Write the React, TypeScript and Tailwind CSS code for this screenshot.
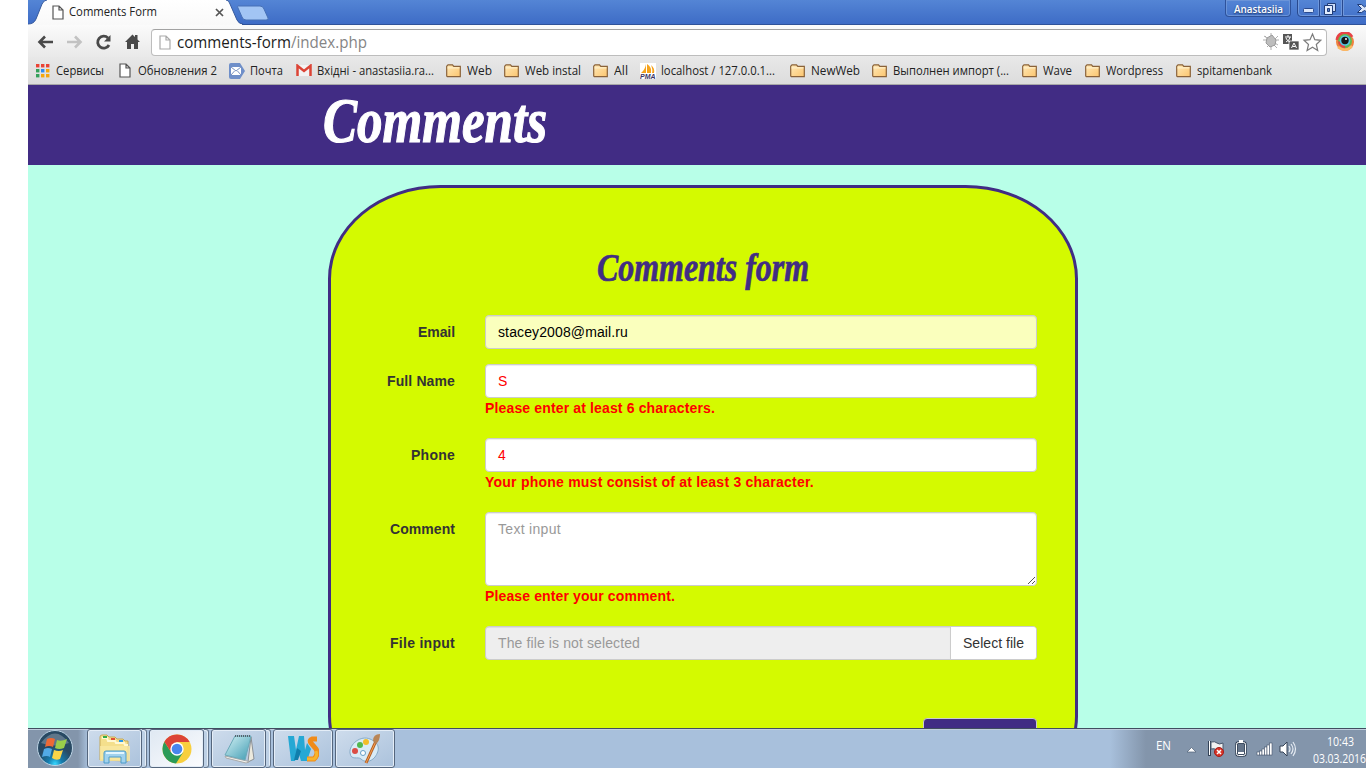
import React, { useLayoutEffect, useRef, useState } from "react";

/* Text stretched or tracked so that it takes exactly the given width. */
function Fit({ w, children, className = "", track = false }: { w: number; children: string; className?: string; track?: boolean }) {
  const ref = useRef<HTMLSpanElement>(null);
  const [style, setStyle] = useState<React.CSSProperties>({});
  useLayoutEffect(() => {
    const natural = ref.current!.getBoundingClientRect().width;
    if (track) setStyle({ letterSpacing: (w - natural) / children.length + "px" });
    else setStyle({ transform: `scaleX(${w / natural})` });
  }, []);
  return (
    <span className="flex shrink-0 whitespace-nowrap" style={{ width: w }}>
      <span ref={ref} style={style} className={"block shrink-0 origin-left whitespace-pre " + className}>{children}</span>
    </span>
  );
}

const Page = ({ className = "" }: { className?: string }) => (
  <svg className={className} width="12" height="15" viewBox="0 0 12 15" fill="#fff" stroke="currentColor" strokeWidth="1.2">
    <path d="M1 1h6l4 4v9H1zM7 1v4h4" />
  </svg>
);

const Folder = () => (
  <svg width="16" height="14" viewBox="0 0 16 14">
    <defs><linearGradient id="fold" x2="1" y2="1"><stop stopColor="#ffe9b8" /><stop offset="1" stopColor="#fbc56f" /></linearGradient></defs>
    <path d="M.7 12V2.200L2 .8h4.500l1.300 1.600h6.500v10.200H1.300z" fill="url(#fold)" stroke="#8a6239" strokeWidth="1.200" />
    <path d="M1.500 3.900h12" stroke="#fff3d2" />
  </svg>
);

const AppsIcon = () => (
  <svg width="14" height="14" viewBox="0 0 14 14">
    {["#ea4335", "#ea4335", "#ea4335", "#34a05a", "#2d8cf0", "#f4a60c", "#34a05a", "#f4a60c", "#f4a60c"].map((c, i) => (
      <rect key={i} x={(i % 3) * 5} y={Math.floor(i / 3) * 5} width="3.400" height="3.400" fill={c} />
    ))}
  </svg>
);

const MailIcon = () => (
  <svg width="16" height="16" viewBox="0 0 16 16">
    <path d="M0 2q0-2 2-2h9l5 8-5 8H2q-2 0-2-2z" fill="#6f8fc9" />
    <path d="M2 4h10v8H2z" fill="#fff" /><path d="M2 4l5 4 5-4M2 12l3.500-4M12 12L8.500 8" fill="none" stroke="#7891bf" />
  </svg>
);

const Gmail = () => (
  <svg width="16" height="13" viewBox="0 0 16 13">
    <path d="M1 1h14v11H1z" fill="#f3f3f3" />
    <path d="M1.500 12V1.800L8 7l6.500-5.200V12" fill="none" stroke="#dc4436" strokeWidth="2.500" />
  </svg>
);

const Pma = () => (
  <svg width="16" height="16" viewBox="0 0 16 16">
    <path d="M0 0h16v16H0z" fill="#fff" />
    <path d="M6 1v9H1q4-3 5-9M7 1q5 3 4 9H7zM11 2q4 3 3 8h-2q1-3-1-8" fill="#f6a31a" />
    <text x="0" y="15.800" fontSize="6.500" fontWeight="bold" fontStyle="italic" textLength="15.500" lengthAdjust="spacingAndGlyphs" fontFamily="Liberation Sans" fill="#3b3565">PMA</text>
  </svg>
);

const bookmarks: { icon: React.ReactNode; label: string; pitch: number; w: number; off?: number }[] = [
  { icon: <AppsIcon />, label: "Сервисы", pitch: 83, w: 48, off: 20 },
  { icon: <Page className="text-[#555]" />, label: "Обновления 2", pitch: 110, w: 79, off: 19 },
  { icon: <MailIcon />, label: "Почта", pitch: 67, w: 33 },
  { icon: <Gmail />, label: "Вхідні - anastasiia.ra...", pitch: 150, w: 117 },
  { icon: <Folder />, label: "Web", pitch: 58, w: 25 },
  { icon: <Folder />, label: "Web instal", pitch: 89, w: 56 },
  { icon: <Folder />, label: "All", pitch: 47, w: 14 },
  { icon: <Pma />, label: "localhost / 127.0.0.1...", pitch: 150, w: 114 },
  { icon: <Folder />, label: "NewWeb", pitch: 82, w: 49 },
  { icon: <Folder />, label: "Выполнен импорт (...", pitch: 150, w: 116 },
  { icon: <Folder />, label: "Wave", pitch: 63, w: 29 },
  { icon: <Folder />, label: "Wordpress", pitch: 91, w: 57 },
  { icon: <Folder />, label: "spitamenbank", pitch: 96, w: 75 },
];

function TabStrip() {
  return (
    <div className="relative flex h-[25px] shrink-0 border-b border-[#2f5299] bg-linear-to-b from-[#5485d5] to-[#3e6cc6]">
      <svg className="absolute left-0 top-0" width="245" height="25" viewBox="0 0 245 25">
        <defs><linearGradient id="tab" x2="0" y2="1"><stop stopColor="#fff" /><stop offset="1" stopColor="#f9f9f9" /></linearGradient></defs>
        <path d="M0 25v-1q6 0 8-5L14 4q2-4 5-4H198q3 0 4 4l7 16q2 4 5 4v1z" fill="url(#tab)" />
        <path d="M0 24q6 0 8-5L14 4q2-4 5-4M198 0q3 0 4 4l7 16q2 4 6 4" fill="none" stroke="#365a9e" />
        <path d="M210 6h22q3 0 4 3l4 9q1 2-2 2h-20q-3 0-4-3l-4-9q-1-2 0-2z" fill="#a2c5f4" stroke="#4670b5" />
      </svg>
      <div className="relative flex h-full w-[210px] items-center pl-6">
        <Page className="text-[#555]" />
        <Fit w={88} className="ml-[5px] text-[12px] leading-[24px] text-[#222]">Comments Form</Fit>
        <svg className="ml-[63px] mt-px" width="9" height="9" viewBox="0 0 9 9"><path d="M1 1l7 7M8 1L1 8" stroke="#555" strokeWidth="1.700" /></svg>
      </div>
      <div className="ml-auto flex h-[17px] text-white">
        <div className="mr-[6px] h-[17px] w-[66px] rounded-b border border-t-0 border-[#2e529b] pl-[8px] shadow-[inset_0_0_0_1px_#6b94d8]">
          <Fit w={49} className="text-[11px] leading-[17px] font-semibold [text-shadow:0_1px_2px_#172d5c]">Anastasiia</Fit>
        </div>
        <svg width="69" height="17" viewBox="0 0 69 17">
          <path d="M.5 0v13q0 3.500 3.500 3.500h65M22.500 0v16.500M45.500 0v16.500" fill="none" stroke="#29498e" />
          <path d="M1.500 0v12q0 3.500 3 3.500H21.500V0M23.500 0v15.500h21V0M46.500 0v15.500h23" fill="none" stroke="#6f98dc" />
          <rect x="6.500" y="8.500" width="10" height="4" rx="1" fill="#dce7fa" stroke="#29498e" />
          <path d="M30.500 3.500h8v8h-8z" fill="#cbdcf7" stroke="#203c78" />
          <path d="M27.500 5.500h8v9h-8z" fill="#e2edff" stroke="#203c78" /><path d="M30.500 8.500h2v3h-2z" fill="#4e7ed0" stroke="#203c78" />
          <path d="M60.500 4.500h4l3 2.500 3-2.500v8l-3-2-3 2h-4l4-4z" fill="#dce7fa" stroke="#203c78" />
        </svg>
      </div>
    </div>
  );
}

function Toolbar() {
  return (
    <div className="flex h-[32px] shrink-0 items-center bg-linear-to-b from-[#fbfbfb] to-[#e9e9e9] pl-[9px] pt-[2px]">
      <svg width="104" height="18" viewBox="0 0 104 18" fill="none">
        <path d="M16 9H3M8 3.500L2.500 9 8 14.500" stroke="#494949" strokeWidth="2.600" />
        <path d="M30 9h13M38 3.500L43.500 9 38 14.500" stroke="#c2c2c2" strokeWidth="2.600" />
        <path d="M71 5a6 6 0 1 0 1 7" stroke="#494949" strokeWidth="2.800" /><path d="M73.500 2v6.500H67z" fill="#494949" />
        <path d="M88 9l7.500-7.500L98 4V2h2.500v4.500L103 9h-2v7h-4v-5h-3v5h-4V9z" fill="#494949" />
      </svg>
      <div className="ml-[10px] flex h-[27px] w-[1176px] shrink-0 items-center rounded-sm border border-[#bdbdbd] border-t-[#a2a2a2] bg-white pl-[7px] pr-[3px]">
        <Page className="text-[#aaa]" />
        <div className="ml-[6px] flex text-[16px] leading-6">
          <Fit w={114} className="text-[#1c1c1c]">comments-form</Fit>
          <Fit w={76} className="text-[#858585]">/index.php</Fit>
        </div>
        <svg className="ml-auto" width="61" height="20" viewBox="0 0 61 20">
          <path d="M3 4l12 12M16 4L5 15M9 1v17M1 8h16M2 4l14 9" stroke="#b0b0b0" />
          <path d="M5 6l5-3 4 5-1 5-5 2-4-4z" fill="#bdbdbd" stroke="#999" />
          <path d="M21 2h9v10h-9z" fill="#555" /><path d="M27 9h10v9H27z" fill="#555" stroke="#fff" strokeWidth=".7" />
          <path d="M23 5h6M26 3v2M24 10q4-2 4-5M24 6q1 3 4 4" stroke="#fff" fill="none" />
          <path d="M29.500 16l2.500-5 2.500 5M30.500 14.500h3" stroke="#fff" fill="none" />
          <path d="M50.500 2l2.300 5.700 6 .6-4.500 4.200 1.400 6-5.200-3.200-5.400 3.200 1.400-6-4.500-4.200 6-.6z" fill="#fff" stroke="#7b7b7b" strokeWidth="1.200" />
        </svg>
      </div>
      <svg className="ml-[8px] shrink-0" width="20" height="20" viewBox="0 0 20 20">
        <circle cx="10" cy="10" r="9" fill="#f0823e" /><path d="M2 8a8 8 0 0 1 15-3" stroke="#e84246" strokeWidth="3" fill="none" />
        <path d="M3 15q7 6 14-1" stroke="#fbb963" strokeWidth="2.500" fill="none" /><circle cx="10" cy="9" r="7" fill="#63b94d" />
        <path d="M3 9a7 7 0 0 0 7 7v-4z" fill="#e84246" /><circle cx="10" cy="8.500" r="5.300" fill="#54c7e3" /><circle cx="10" cy="8.500" r="3.700" fill="#171717" /><circle cx="11" cy="7" r="1" fill="#fff" />
      </svg>
    </div>
  );
}

function Bookmarks() {
  return (
    <div className="flex h-[28px] shrink-0 items-center border-b border-[#a7a7a7] bg-linear-to-b from-[#e8e8e8] to-[#dcdcdc] pl-2">
      {bookmarks.map((b) => (
        <div key={b.label} className="flex shrink-0 items-center" style={{ width: b.pitch }}>
          <div className="flex h-4 shrink-0 items-center" style={{ width: b.off ?? 21 }}>{b.icon}</div>
          <Fit w={b.w} className="text-[12px] leading-[18px] text-[#222]">{b.label}</Fit>
        </div>
      ))}
    </div>
  );
}

const field = "h-[34px] rounded border border-[#ccc] px-3 text-[14px] leading-[32px] shadow-[inset_0_1px_1px_rgba(0,0,0,0.075)]";

function Row({ label, w, error, errorW = 0, children }: { label: string; w: number; error?: string; errorW?: number; children: React.ReactNode }) {
  return (
    <div className="mb-[15px] flex">
      <div className="mr-[30px] flex w-[124px] shrink-0 justify-end pt-[7px] text-[14px] leading-5 font-bold text-[#333]"><Fit track w={w}>{label}</Fit></div>
      <div className="w-[552px]">
        {children}
        {error && <div className="mb-[5px] h-5 text-[14px] leading-5 font-bold text-[#f00]"><Fit track w={errorW}>{error}</Fit></div>}
      </div>
    </div>
  );
}

function CommentForm() {
  return (
    <div className="ml-[300px] mt-5 h-[625px] w-[750px] shrink-0 rounded-[15%] border-[3px] border-[#412c84] bg-[#d4fa00] font-['Liberation_Sans',sans-serif]">
      <div className="flex h-[127px] justify-center pt-[54px]">
        <Fit w={212} className="font-['Liberation_Serif',serif] text-[40px] leading-[52px] font-bold italic text-[#412c84] [-webkit-text-stroke:0.7px_#412c84]">Comments form</Fit>
      </div>
      <Row label="Email" w={37}><div className={field + " bg-[#faffbd] text-black"}><Fit track w={130}>stacey2008@mail.ru</Fit></div></Row>
      <Row label="Full Name" w={68} error="Please enter at least 6 characters." errorW={230}><div className={field + " bg-white text-[#f00]"}>S</div></Row>
      <Row label="Phone" w={44} error="Your phone must consist of at least 3 character." errorW={329}><div className={field + " bg-white text-[#f00]"}>4</div></Row>
      <Row label="Comment" w={65} error="Please enter your comment." errorW={190}>
        <div className="flex h-[74px] items-end justify-between rounded border border-[#ccc] bg-white pl-3 text-[14px] text-[#999] shadow-[inset_0_1px_1px_rgba(0,0,0,0.075)]">
          <div className="self-start leading-[32px]"><Fit track w={63}>Text input</Fit></div>
          <svg width="9" height="9" viewBox="0 0 9 9"><path d="M1 8l7-7M5 8l3-3" stroke="#555" /></svg>
        </div>
      </Row>
      <Row label="File input" w={65}>
        <div className="flex h-[34px] overflow-hidden rounded border border-[#ccc] bg-[#eee] text-[14px] leading-[32px]">
          <div className="w-[465px] border-r border-[#ccc] pl-3 text-[#999] shadow-[inset_0_1px_1px_rgba(0,0,0,0.075)]"><Fit track w={142}>The file is not selected</Fit></div>
          <div className="flex-1 bg-white pl-3 text-[#333]"><Fit track w={61}>Select file</Fit></div>
        </div>
      </Row>
      <div className="ml-[592px] mt-[58px] h-[34px] w-[114px] rounded border border-[#ccc] bg-[#412c84]" />
    </div>
  );
}

const Explorer = () => (
  <svg width="34" height="32" viewBox="0 0 34 32">
    <path d="M2 27V4q0-2 2-2h5l2 2h6l2 2h6l2 2h3v20z" fill="#f4df8c" stroke="#c5a957" />
    <path d="M4 5h5l1 3h7l1 2h8l1 2h3" fill="none" stroke="#fff8d2" strokeWidth="2" />
    <path d="M5 3h4v2H5z" fill="#32ac45" /><path d="M13 5h4v2h-4z" fill="#df4f36" /><path d="M21 7h4v2h-4z" fill="#2999e5" />
    <path d="M2 13h30v15H2z" fill="#f9e8a3" opacity=".8" />
    <path d="M6 30V20q0-2 2-2h18q2 0 2 2v10h-5v-6H11v6z" fill="#a1d2ed" stroke="#4b9bca" /><path d="M8 20h18" stroke="#e2f6ff" strokeWidth="2" />
  </svg>
);

const Chrome = () => (
  <svg width="30" height="30" viewBox="0 0 30 30">
    <circle cx="15" cy="15" r="14.500" fill="#f8cf3e" />
    <path d="M2.400 7.800A14.500 14.500 0 0 0 14 29.500L21.300 18 15 21 9 18z" fill="#2b9b58" />
    <path d="M2.400 7.800L9 18l1-6 5-4h12.600A14.500 14.500 0 0 0 2.400 7.800" fill="#dc4437" />
    <circle cx="15" cy="15" r="6.700" fill="#fff" /><circle cx="15" cy="15" r="5.300" fill="#4986ed" />
  </svg>
);

const Notepad = () => (
  <svg width="32" height="30" viewBox="0 0 32 30">
    <defs><linearGradient id="note" x2="1" y2="1"><stop stopColor="#d5f2f5" /><stop offset="1" stopColor="#3e9bb2" /></linearGradient></defs>
    <path d="M28 3l3 22-6 3z" fill="#ece9dd" stroke="#8b9096" /><path d="M2 22l22 5 2 1-3 1L3 24z" fill="#f5f5ef" stroke="#aaa" />
    <path d="M12 2h16l-6 24L2 21z" fill="url(#note)" stroke="#6ba9b8" /><path d="M12 2h16" stroke="#58636d" strokeWidth="2" strokeDasharray="1 1" />
  </svg>
);

const WebStorm = () => (
  <svg width="32" height="28" viewBox="0 0 32 28">
    <path d="M1 1h6l2 14 3-14h5l1 14 2-7 4 6-4 12h-6l-3-10-3 10H4z" fill="#25a8d4" />
    <path d="M10 13l-3 12h4l3-9z" fill="#107eac" />
    <path d="M30 4h-5q-3 1-1 4l5 6q3 5-2 10h-7" fill="none" stroke="#f18b19" strokeWidth="5" /><path d="M20 24h7q4-3 2-8" fill="none" stroke="#f8b42b" strokeWidth="3" />
  </svg>
);

const Paint = () => (
  <svg width="34" height="32" viewBox="0 0 34 32">
    <path d="M22 6C13 2 1 11 2 20c1 8 8 3 11 6s9 4 14-2c5-7 5-14-5-18z" fill="#d9ebf6" stroke="#86abc8" />
    <circle cx="7" cy="18" r="3" fill="#db4d45" /><circle cx="12" cy="12" r="3" fill="#51b750" /><circle cx="18" cy="9" r="3" fill="#f2bd29" /><circle cx="15" cy="20" r="2.500" fill="#fff" stroke="#679fc6" />
    <path d="M28 8L18 30" stroke="#b55e22" strokeWidth="3" /><path d="M28 8L18 30" stroke="#f4a054" />
    <path d="M25 8q0-7 7-7 0 7-4 10z" fill="#b98556" />
  </svg>
);

function TaskButton({ children, active, stacked, className }: { children: React.ReactNode; active?: boolean; stacked?: boolean; className: string }) {
  return (
    <div className={"flex h-[39px] shrink-0 " + className}>
      <div className={"flex flex-1 items-center justify-center rounded-[3px] border border-[#55667d] shadow-[inset_0_0_0_1px_#e4edf7] " + (active ? "bg-linear-to-br from-[#dfe8f2] to-[#fbfcfe]" : "bg-linear-to-br from-[#cedcec] to-[#abc2dc]")}>{children}</div>
      {stacked && <div className="w-[5px] rounded-r-[3px] border border-l-0 border-[#65768c] bg-[#bdd0e5] shadow-[inset_-1px_1px_0_#e4edf7]" />}
    </div>
  );
}

function Taskbar() {
  return (
    <div className="flex h-10 shrink-0 border-t border-[#414d60] bg-[linear-gradient(to_right,#8395ab_0,#8395ab_50px,#a8c0dc_60px,#a8c0dc_1082px,#8395ab_1118px)] shadow-[inset_0_1px_0_#c0cedd]">
      <svg className="ml-2 shrink-0" width="38" height="38" viewBox="0 0 38 38">
        <defs><radialGradient id="orb" cy=".95"><stop stopColor="#35d7ff" /><stop offset=".4" stopColor="#147cae" /><stop offset="1" stopColor="#284963" /></radialGradient></defs>
        <circle cx="19" cy="19" r="17.500" fill="url(#orb)" stroke="#bdd4e5" />
        <path d="M5 14Q19-5 33 14q-14 5-28 0" fill="#fff" opacity=".25" />
        <path d="M11 10q4-2 8 0l-2 8q-4-2-8 0z" fill="#ed6935" /><path d="M21 11q4 2 10-1l-3 9q-5 2-9 0z" fill="#9acd4a" />
        <path d="M8 20q4-2 8 0l-2 8q-3-2-8 0z" fill="#52aae6" /><path d="M18 21q5 2 9 0l-3 9q-4 2-8-1z" fill="#fcd548" />
      </svg>
      <TaskButton stacked className="ml-[13px] w-[60px]"><Explorer /></TaskButton>
      <TaskButton stacked active className="ml-[2px] w-[60px]"><Chrome /></TaskButton>
      <TaskButton stacked className="ml-[2px] w-[60px]"><Notepad /></TaskButton>
      <TaskButton className="ml-[2px] w-[60px]"><WebStorm /></TaskButton>
      <TaskButton className="ml-[2px] w-[60px]"><Paint /></TaskButton>
      <div className="ml-auto flex shrink-0 items-start text-white">
        <div className="mt-[8px] w-[30px]"><Fit w={15} className="text-[12px] leading-[18px]">EN</Fit></div>
        <svg className="mt-[8px]" width="112" height="24" viewBox="0 0 112 24">
          <path d="M1 15l4.500-4.500L10 15z" fill="#fff" stroke="#4f6075" strokeWidth=".7" />
          <path d="M23.500 4v15" stroke="#344357" strokeWidth="3" /><path d="M25 5q4-1 6 1t6 0v8q-3 1-6-1t-6-1z" fill="#f1f1f1" stroke="#49586c" /><path d="M23.500 4v14" stroke="#fff" />
          <circle cx="33" cy="15" r="4.500" fill="#d93528" stroke="#a51c18" /><path d="M31 13l4 4M35 13l-4 4" stroke="#fff" strokeWidth="1.500" />
          <rect x="50.500" y="5.500" width="9" height="13" rx="2" fill="#647489" stroke="#344357" strokeWidth="2.500" /><rect x="50.500" y="5.500" width="9" height="13" rx="2" fill="none" stroke="#fff" /><path d="M53 4h4" stroke="#fff" strokeWidth="2" /><path d="M52 15h6v2h-6z" fill="#fff" />
          {[3, 4, 6, 8, 10, 12].map((h, i) => <rect key={i} x={71 + i * 2.5} y={18 - h} width="2.500" height={h} fill="#fff" stroke="#43536a" strokeWidth=".6" />)}
          <path d="M94 9h3l4-4v14l-4-4h-3z" fill="#fff" stroke="#344357" /><path d="M103 9q2 3 0 6M105 7q4 5 0 10M107 5q5 7 0 14" fill="none" stroke="#e5ebf2" strokeWidth="1.200" />
        </svg>
        <div className="ml-[15px] w-[53px] pt-[4px] text-[12px] leading-[17px]">
          <div className="pl-[14px]"><Fit w={27}>10:43</Fit></div>
          <Fit w={53}>03.03.2016</Fit>
        </div>
      </div>
    </div>
  );
}

export default function App() {
  return (
    <div className="h-[768px] w-[1366px] overflow-hidden bg-white pl-7">
      <div className="flex h-full flex-col overflow-hidden bg-[#b8ffe8] font-['Open_Sans','Noto_Sans',sans-serif]">
        <TabStrip />
        <Toolbar />
        <Bookmarks />
        <header className="h-20 shrink-0 bg-[#412c84] pl-[295px]">
          <Fit w={224} className="font-['Liberation_Serif',serif] text-[64px] leading-[72px] font-bold italic text-white [-webkit-text-stroke:1.2px_white]">Comments</Fit>
        </header>
        <main className="flex min-h-0 flex-1 overflow-hidden"><CommentForm /></main>
        <Taskbar />
      </div>
    </div>
  );
}
